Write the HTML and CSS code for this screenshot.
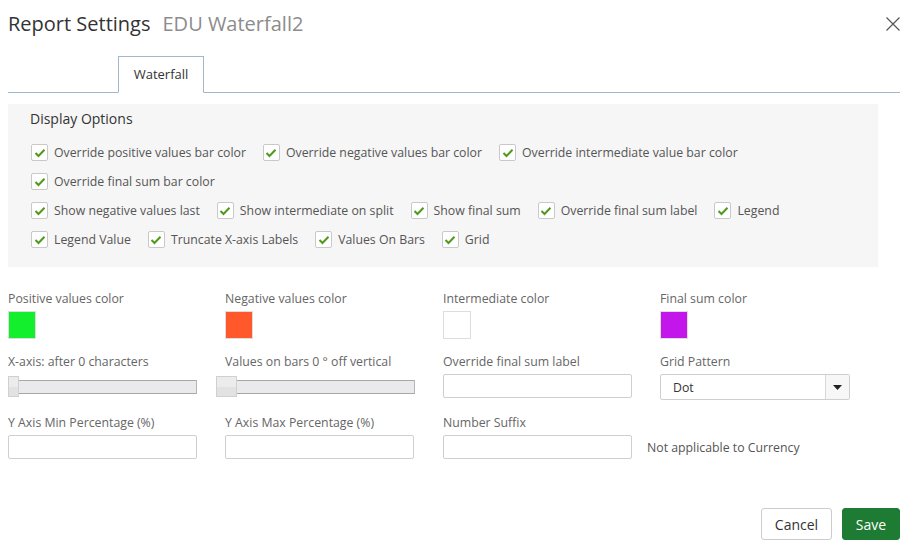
FILE: index.html
```html
<!DOCTYPE html>
<html>
<head>
<meta charset="utf-8">
<link rel="stylesheet" href="styles.css">
</head>
<body>
<div class="dialog">
  <div class="header">
    <h1 class="title">Report Settings<span class="subtitle">EDU Waterfall2</span></h1>
    <button class="close" aria-label="Close">
      <svg width="16" height="16" viewBox="0 0 16 16"><path d="M1.5 1.5 L14.5 14.5 M14.5 1.5 L1.5 14.5" stroke="#555" stroke-width="1.2" fill="none"/></svg>
    </button>
  </div>

  <div class="tabs">
    <div class="tab">Waterfall</div>
  </div>

  <div class="panel">
    <div class="panel-title">Display Options</div>
    <div class="checks">
      <label class="check"><span class="box"><svg width="12" height="10" viewBox="0 0 12 10"><path d="M1.5 5 L4.5 8 L10.5 1.8" stroke="#4f9a1a" stroke-width="2" fill="none"/></svg></span>Override positive values bar color</label>
      <label class="check"><span class="box"><svg width="12" height="10" viewBox="0 0 12 10"><path d="M1.5 5 L4.5 8 L10.5 1.8" stroke="#4f9a1a" stroke-width="2" fill="none"/></svg></span>Override negative values bar color</label>
      <label class="check"><span class="box"><svg width="12" height="10" viewBox="0 0 12 10"><path d="M1.5 5 L4.5 8 L10.5 1.8" stroke="#4f9a1a" stroke-width="2" fill="none"/></svg></span>Override intermediate value bar color</label>
      <label class="check"><span class="box"><svg width="12" height="10" viewBox="0 0 12 10"><path d="M1.5 5 L4.5 8 L10.5 1.8" stroke="#4f9a1a" stroke-width="2" fill="none"/></svg></span>Override final sum bar color</label>
    </div>
    <div class="checks">
      <label class="check"><span class="box"><svg width="12" height="10" viewBox="0 0 12 10"><path d="M1.5 5 L4.5 8 L10.5 1.8" stroke="#4f9a1a" stroke-width="2" fill="none"/></svg></span>Show negative values last</label>
      <label class="check"><span class="box"><svg width="12" height="10" viewBox="0 0 12 10"><path d="M1.5 5 L4.5 8 L10.5 1.8" stroke="#4f9a1a" stroke-width="2" fill="none"/></svg></span>Show intermediate on split</label>
      <label class="check"><span class="box"><svg width="12" height="10" viewBox="0 0 12 10"><path d="M1.5 5 L4.5 8 L10.5 1.8" stroke="#4f9a1a" stroke-width="2" fill="none"/></svg></span>Show final sum</label>
      <label class="check"><span class="box"><svg width="12" height="10" viewBox="0 0 12 10"><path d="M1.5 5 L4.5 8 L10.5 1.8" stroke="#4f9a1a" stroke-width="2" fill="none"/></svg></span>Override final sum label</label>
      <label class="check"><span class="box"><svg width="12" height="10" viewBox="0 0 12 10"><path d="M1.5 5 L4.5 8 L10.5 1.8" stroke="#4f9a1a" stroke-width="2" fill="none"/></svg></span>Legend</label>
      <label class="check"><span class="box"><svg width="12" height="10" viewBox="0 0 12 10"><path d="M1.5 5 L4.5 8 L10.5 1.8" stroke="#4f9a1a" stroke-width="2" fill="none"/></svg></span>Legend Value</label>
      <label class="check"><span class="box"><svg width="12" height="10" viewBox="0 0 12 10"><path d="M1.5 5 L4.5 8 L10.5 1.8" stroke="#4f9a1a" stroke-width="2" fill="none"/></svg></span>Truncate X-axis Labels</label>
      <label class="check"><span class="box"><svg width="12" height="10" viewBox="0 0 12 10"><path d="M1.5 5 L4.5 8 L10.5 1.8" stroke="#4f9a1a" stroke-width="2" fill="none"/></svg></span>Values On Bars</label>
      <label class="check"><span class="box"><svg width="12" height="10" viewBox="0 0 12 10"><path d="M1.5 5 L4.5 8 L10.5 1.8" stroke="#4f9a1a" stroke-width="2" fill="none"/></svg></span>Grid</label>
    </div>
  </div>

  <div class="form">
    <div class="field">
      <div class="label">Positive values color</div>
      <div class="swatch swatch-green"></div>
    </div>
    <div class="field">
      <div class="label">Negative values color</div>
      <div class="swatch swatch-orange"></div>
    </div>
    <div class="field">
      <div class="label">Intermediate color</div>
      <div class="swatch swatch-white"></div>
    </div>
    <div class="field">
      <div class="label">Final sum color</div>
      <div class="swatch swatch-purple"></div>
    </div>

    <div class="field">
      <div class="label">X-axis: after 0 characters</div>
      <div class="slider"><div class="track"></div><div class="thumb thumb-narrow"></div></div>
    </div>
    <div class="field field-slider2">
      <div class="label">Values on bars 0 ° off vertical</div>
      <div class="slider"><div class="track"></div><div class="thumb"></div></div>
    </div>
    <div class="field">
      <div class="label">Override final sum label</div>
      <div class="input"></div>
    </div>
    <div class="field">
      <div class="label">Grid Pattern</div>
      <div class="select"><span class="select-value">Dot</span><span class="select-btn"><svg width="9" height="5" viewBox="0 0 9 5"><path d="M0 0 H9 L4.5 5 Z" fill="#222"/></svg></span></div>
    </div>

    <div class="field">
      <div class="label">Y Axis Min Percentage (%)</div>
      <div class="input"></div>
    </div>
    <div class="field">
      <div class="label">Y Axis Max Percentage (%)</div>
      <div class="input"></div>
    </div>
    <div class="field">
      <div class="label">Number Suffix</div>
      <div class="inline"><div class="input"></div><span class="note">Not applicable to Currency</span></div>
    </div>
    <div class="field"></div>
  </div>

  <div class="footer">
    <button class="btn btn-cancel">Cancel</button>
    <button class="btn btn-save">Save</button>
  </div>
</div>
</body>
</html>
```

FILE: styles.css
```css
* { box-sizing: border-box; }
html, body { margin: 0; padding: 0; background: #fff; }
body {
  font-family: "Open Sans", "Liberation Sans", sans-serif;
  color: #555;
  width: 915px;
  height: 554px;
  overflow: hidden;
}
.dialog { padding: 0 15px 0 8px; }

.header {
  display: flex;
  justify-content: space-between;
  align-items: flex-start;
  padding-top: 10px;
  height: 56px;
}
.title {
  margin: 0;
  font-size: 20px;
  font-weight: 400;
  line-height: 28px;
  color: #333;
}
.subtitle {
  margin-left: 12px;
  color: #8c8c8c;
  font-size: 20px;
}
.close {
  border: 0;
  background: none;
  padding: 0;
  margin-top: 6px;
  margin-right: -1px;
  width: 16px;
  height: 16px;
  cursor: pointer;
}
.close svg { display: block; }

.tabs {
  display: flex;
  border-bottom: 1px solid #a1b7cb;
  padding-left: 110px;
  height: 37px;
}
.tab {
  height: 37px;
  width: 86px;
  border: 1px solid #a1b7cb;
  border-bottom: 1px solid #fff;
  background: #fff;
  font-size: 13px;
  color: #333;
  text-align: center;
  line-height: 35px;
}

.panel {
  margin-top: 11px;
  width: 870px;
  background: #f6f6f6;
  padding: 5px 22px 13px 22px;
}
.panel-title {
  font-size: 14px;
  font-weight: 500;
  color: #333;
  line-height: 20px;
  margin-bottom: 9px;
}
.checks {
  display: flex;
  flex-wrap: wrap;
  column-gap: 16px;
}
.check {
  display: flex;
  align-items: center;
  height: 29px;
  font-size: 12.3px;
  color: #555;
  white-space: nowrap;
}
.box {
  width: 17px;
  height: 17px;
  margin-left: 1px;
  margin-right: 6px;
  border: 1px solid #c9c9c9;
  border-radius: 2px;
  background: #fff;
  display: flex;
  align-items: center;
  justify-content: center;
}
.box svg { display: block; margin-top: 1px; }

.form {
  margin-top: 23px;
  display: grid;
  grid-template-columns: 217px 218px 217px 217px;
  row-gap: 14px;
}
.field { display: flex; flex-direction: column; }
.label {
  font-size: 12.3px;
  line-height: 17px;
  color: #666;
  margin-bottom: 4px;
  white-space: nowrap;
}
.swatch {
  width: 28px;
  height: 28px;
  border: 1px solid #ddd;
}
.swatch-green { background: #13ef2d; }
.swatch-orange { background: #ff592b; }
.swatch-white { background: #fff; }
.swatch-purple { background: #c316eb; }

.slider {
  position: relative;
  width: 189px;
  height: 24px;
  margin-top: 1px;
}
.field-slider2 .slider { margin-left: -9px; width: 199px; }
.track {
  position: absolute;
  left: 0; right: 0;
  top: 5px;
  height: 14px;
  background: #eaeaec;
  border-top: 1px solid #a8a8a8;
  border-bottom: 1px solid #a8a8a8;
  border-right: 1px solid #b5b5b5;
}
.thumb {
  position: absolute;
  left: 0;
  top: 1px;
  width: 21px;
  height: 21px;
  border: 1px solid #d0d0d0;
  background: linear-gradient(#ececec 50%, #e2e2e2 50%);
}
.thumb-narrow { width: 11px; }

.input {
  flex: none;
  width: 189px;
  height: 24px;
  border: 1px solid #cfcfcf;
  border-radius: 2px;
  background: #fff;
}
.select {
  width: 190px;
  height: 26px;
  border: 1px solid #cfcfcf;
  border-radius: 2px;
  background: #fff;
  display: flex;
  align-items: center;
}
.select-value {
  flex: 1;
  padding-left: 12px;
  font-size: 12.3px;
  color: #333;
}
.select-btn {
  width: 24px;
  height: 100%;
  border-left: 1px solid #d8d8d8;
  background: #f7f7f7;
  display: flex;
  align-items: center;
  justify-content: center;
}
.select-btn svg { display: block; }

.inline {
  display: flex;
  align-items: center;
  white-space: nowrap;
}
.note {
  margin-left: 15px;
  font-size: 12.3px;
  color: #555;
}

.footer {
  display: flex;
  justify-content: flex-end;
  gap: 10px;
  margin-top: 49px;
}
.btn {
  font-family: "Open Sans", "Liberation Sans", sans-serif;
  font-size: 14px;
  height: 32px;
  border-radius: 3px;
  padding: 0;
  cursor: pointer;
}
.btn-cancel {
  width: 71px;
  background: #fff;
  border: 1px solid #cccccc;
  color: #333;
}
.btn-save {
  width: 58px;
  background: #1d7b33;
  border: 1px solid #1d7b33;
  color: #fff;
}
```
